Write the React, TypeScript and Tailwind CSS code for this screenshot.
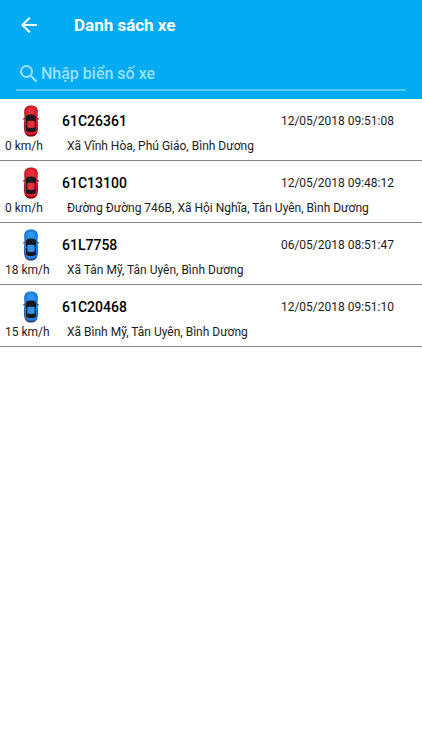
import { useState } from "react";

type Vehicle = {
    plate: string;
    speed: number;
    time: string;
    address: string;
}

const vehicles: Vehicle[] = [
    { plate: '61C26361', speed: 0, time: '12/05/2018 09:51:08', address: 'Xã Vĩnh Hòa, Phú Giáo, Bình Dương' },
    { plate: '61C13100', speed: 0, time: '12/05/2018 09:48:12', address: 'Đường Đường 746B, Xã Hội Nghĩa, Tân Uyên, Bình Dương' },
    { plate: '61L7758', speed: 18, time: '06/05/2018 08:51:47', address: 'Xã Tân Mỹ, Tân Uyên, Bình Dương' },
    { plate: '61C20468', speed: 15, time: '12/05/2018 09:51:10', address: 'Xã Bình Mỹ, Tân Uyên, Bình Dương' },
];

// red = stopped, blue = moving
function CarIcon({ moving }: { moving: boolean }) {
    const body = moving ? '#1b84e8' : '#dc1f2c';
    const light = moving ? '#2f94f2' : '#e62f3b';
    const edge = moving ? '#1263b4' : '#a31420';

    return (
        <svg viewBox="0 0 18 32" className="h-8 w-[18px]" aria-hidden="true">
            <path d="M.8 13.800 3 12.600v1.800l-2 .2ZM17.200 13.800 15 12.600v1.800l2 .2Z" fill={edge} />
            <path d="M9 .5c3.800 0 6.300 1.600 6.700 4.800.3 2.700-.3 5.200-.2 8 .1 2.500.7 4.800.6 8 0 2.800-.3 4.800-1 6.600-.9 2.400-2.900 3.600-6.100 3.600s-5.200-1.200-6.100-3.600c-.7-1.800-1-3.800-1-6.600-.1-3.200.5-5.500.6-8 .1-2.800-.5-5.300-.2-8C2.700 2.100 5.200.5 9 .5Z" fill={edge} />
            <path d="M9 1c3.400 0 5.500 1.400 5.900 4.300.3 2.700-.3 5.200-.2 8 .1 2.500.6 4.800.5 8 0 2.600-.3 4.400-.9 6-.8 2-2.500 3-5.300 3s-4.500-1-5.300-3c-.6-1.600-.9-3.400-.9-6-.1-3.200.4-5.500.5-8 .1-2.800-.5-5.300-.2-8C3.500 2.400 5.600 1 9 1Z" fill={body} />
            <path d="M5.600 4.200C6.600 2.500 11.400 2.500 12.400 4.200L12 9H6Z" fill={light} />
            <path d="M3.800 12C5.500 8.800 12.500 8.800 14.200 12L13.900 18v4l.2 3.600c-1.700 2-8.500 2-10.200 0L4.100 22v-4Z" fill="#17191f" />
            <path d="M5.400 16.200c2-.6 5.200-.6 7.200 0v6.300c-2 .5-5.200.5-7.200 0Z" fill={light} />
            <path d="M3.700 18.200h1.700v.9H3.700ZM12.600 18.200h1.700v.9h-1.700Z" fill={body} />
            <path d="M3.200 27.800c1.900 2.700 9.700 2.700 11.600 0-1 4.600-10.600 4.600-11.600 0Z" fill={moving ? '#27436f' : '#6e0d15'} />
            {moving && <path d="M3.500 27.600 5.600 30M14.500 27.600 12.400 30" stroke="#c5283a" strokeWidth="1" />}
        </svg>
    )
}

function VehicleRow({ vehicle }: { vehicle: Vehicle }) {
    return (
        <li className="flex h-[62px] border-b border-[#858585] pt-1.5 text-xs leading-[18px] text-[#1c1c1c]">
            <div className="flex w-[62px] shrink-0 flex-col">
                <div className="pl-[22px]">
                    <CarIcon moving={vehicle.speed > 0} />
                </div>
                <span className="whitespace-nowrap pl-[5px]">{vehicle.speed} km/h</span>
            </div>
            <div className="min-w-0 flex-1">
                <div className="flex h-8 items-center justify-between pr-7">
                    <span className="text-sm font-medium text-black">{vehicle.plate}</span>
                    <time>{vehicle.time}</time>
                </div>
                <p className="truncate pl-[5px]">{vehicle.address}</p>
            </div>
        </li>
    )
}

export default function App() {

    const [search, setSearch] = useState<string>('');

    const results = vehicles.filter((v) => v.plate.toLowerCase().includes(search.trim().toLowerCase()));

    return (
        <div className="min-h-screen bg-white font-['Roboto','Noto_Sans',sans-serif]">
            <header className="bg-[#03abf3] pb-2">
                <div className="flex h-[50px] items-center gap-[33px] pl-[17px]">
                    <button type="button" aria-label="Quay lại" className="text-white">
                        <svg viewBox="4 4 16 16" className="size-6 p-1" fill="currentColor" aria-hidden="true">
                            <path d="M20 11H7.830l5.590-5.590L12 4l-8 8 8 8 1.410-1.410L7.830 13H20v-2z" />
                        </svg>
                    </button>
                    <h1 className="text-[17px] font-bold leading-6 text-white">Danh sách xe</h1>
                </div>
                <label className="mx-4 mt-3 flex h-[29px] items-center gap-[3px] border-b-2 border-[#55c9fa] pb-1 pl-1 text-[#9de0fb]">
                    <svg viewBox="3 3 18 18" className="size-[18px]" fill="currentColor" aria-hidden="true">
                        <path d="M15.500 14h-.79l-.28-.27A6.471 6.471 0 0 0 16 9.500 6.500 6.500 0 1 0 9.500 16c1.610 0 3.090-.59 4.230-1.570l.27.28v.79l5 4.990L20.490 19l-4.990-5zm-6 0C7.010 14 5 11.990 5 9.500S7.010 5 9.500 5 14 7.010 14 9.500 11.990 14 9.500 14z" />
                    </svg>
                    <input
                        type="text"
                        aria-label="Nhập biển số xe"
                        placeholder="Nhập biển số xe"
                        value={search}
                        onChange={(e) => setSearch(e.target.value)}
                        className="min-w-0 flex-1 bg-transparent text-base font-medium leading-6 text-white outline-none placeholder:text-[#9de0fb]"
                    />
                </label>
            </header>
            <ul>
                {results.map((vehicle) => (
                    <VehicleRow key={vehicle.plate} vehicle={vehicle} />
                ))}
            </ul>
        </div>
    )
}
